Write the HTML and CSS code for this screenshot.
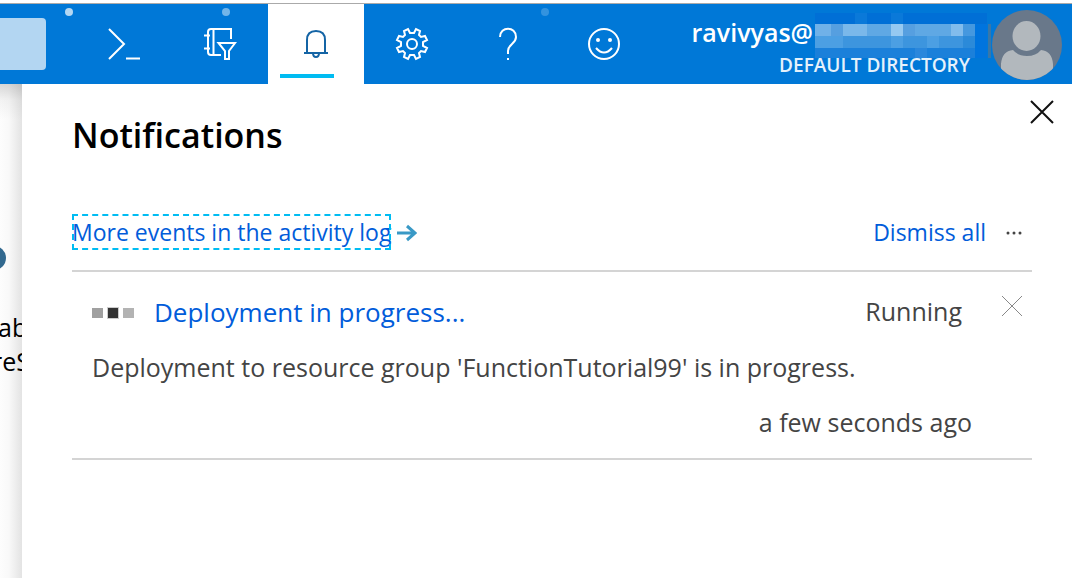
FILE: index.html
```html
<!DOCTYPE html>
<html lang="en">
<head>
<meta charset="utf-8">
<meta name="viewport" content="width=device-width, initial-scale=1">
<title>Notifications</title>
<link rel="stylesheet" href="styles.css">
</head>
<body>
<header class="topbar">
  <div class="search"></div>
  <nav class="tools" aria-label="Portal tools">
    <button class="tool" aria-label="Cloud Shell"><svg width="36" height="36" viewBox="0 0 36 36"><path d="M3 3 18 18 3 33M20 32.500H34"/></svg></button>
    <button class="tool" aria-label="Directory and subscription filter"><svg width="36" height="36" viewBox="0 0 36 36"><path d="M29 13V3H9Q6 3 6 6V26Q6 29 9 29H19M11.500 3V29M2 9.500H8M2 22.500H8M16.500 17H33L27 25V33H23V25Z"/></svg></button>
    <button class="tool active" aria-label="Notifications"><svg width="36" height="36" viewBox="0 0 36 36"><path d="M6 27H30M9 27V14Q9 5 18 5T27 14V27M15 27Q15 31 18 31T21 27"/></svg></button>
    <button class="tool" aria-label="Settings"><svg width="36" height="36" viewBox="0 0 36 36"><path d="M14 3 16 7H20L22 3 26 5 25 9 27 11 31 10 33 14 29 16V20L33 22 31 26 27 25 25 27 26 31 22 33 20 29H16L14 33 10 31 11 27 9 25 5 26 3 22 7 20V16L3 14 5 10 9 11 11 9 10 5Z"/><circle cx="18" cy="18" r="5"/></svg></button>
    <button class="tool" aria-label="Help"><svg width="36" height="36" viewBox="0 0 36 36"><path d="M10 11C10 0 26 0 26 11C26 18 18 18 18 25V28M18 32V34"/></svg></button>
    <button class="tool" aria-label="Feedback"><svg width="36" height="36" viewBox="0 0 36 36"><circle cx="18" cy="18" r="15"/><path d="M10 22Q18 31 26 22"/><g class="solid"><circle cx="12" cy="14" r="2"/><circle cx="24" cy="14" r="2"/></g></svg></button>
  </nav>
  <div class="account">
    <div class="who">
      <div class="user">
        <span>ravivyas@</span>
        <svg class="mask" width="176" height="45" viewBox="0 0 176 45" shape-rendering="crispEdges" aria-hidden="true">
          <path fill="#006fd6" d="M0 0H172V45H0Z"/>
          <path fill="#0a79d9" d="M40 0H52V11H40ZM76 0H88V11H76Z"/>
          <path fill="#5fa8e4" d="M0 11H160V23H0Z"/>
          <path fill="#70b1e8" d="M0 11H16V23H0Z"/>
          <path fill="#7ab8ea" d="M28 11H52V23H28Z"/>
          <path fill="#96c9f1" d="M76 11H88V23H76Z"/>
          <path fill="#569fe0" d="M16 11H28V23H16ZM88 11H100V23H88Z"/>
          <path fill="#82bcec" d="M136 11H148V23H136Z"/>
          <path fill="#4598df" d="M148 11H160V23H148Z"/>
          <path fill="#3d95de" d="M0 23H160V35H0Z"/>
          <path fill="#4c9fe3" d="M0 23H28V35H0ZM76 23H88V35H76ZM112 23H124V35H112Z"/>
          <path fill="#2b8ad9" d="M148 23H160V35H148Z"/>
          <path fill="#1b80da" d="M0 35H160V45H0Z"/>
          <path fill="#2a87dc" d="M100 35H112V45H100Z"/>
          <path fill="#0074de" d="M160 11H172V45H160Z"/>
          <path fill="#3977a8" d="M173 11H176V45H173Z"/>
        </svg>
      </div>
      <div class="directory">DEFAULT DIRECTORY</div>
    </div>
    <svg class="avatar" width="70" height="70" viewBox="0 0 70 70" role="img" aria-label="Account picture">
      <clipPath id="round"><circle cx="35" cy="35" r="35"/></clipPath>
      <g clip-path="url(#round)">
        <path fill="#69788a" d="M0 0H70V70H0Z"/>
        <ellipse cx="34.500" cy="26" rx="14" ry="15" fill="#b2b8bd"/>
        <path fill="#b2b8bd" d="M9 70V54Q10 41 21 40Q26 46 35 46T49 40Q60 41 61 54V70Z"/>
      </g>
    </svg>
  </div>
  <i class="spark spark-a"></i><i class="spark spark-b"></i><i class="spark spark-c"></i>
</header>
<div class="body">
  <aside class="page">
    <div class="knob"></div>
    <p>ab</p>
    <p class="cut">reS</p>
  </aside>
  <main class="panel">
    <button class="close" aria-label="Close"><svg width="24" height="24" viewBox="0 0 24 24"><path d="M1 1 23 23M23 1 1 23"/></svg></button>
    <h1>Notifications</h1>
    <div class="actions">
      <a class="more" href="#">More events in the activity log</a>
      <svg class="arrow" width="20" height="18" viewBox="0 0 20 18" aria-hidden="true"><path d="M0 9H18M10 2 18 9 10 16"/></svg>
      <button class="dismiss">Dismiss all</button>
      <button class="menu" aria-label="More options"><svg width="18" height="4" viewBox="0 0 18 4"><circle cx="3" cy="2" r="1.500"/><circle cx="9" cy="2" r="1.500"/><circle cx="15" cy="2" r="1.500"/></svg></button>
    </div>
    <article class="item">
      <div class="item-head">
        <svg class="progress" width="42" height="36" viewBox="0 0 42 36" aria-hidden="true"><path fill="#a0a0a0" d="M0 14H11V24H0Z"/><path fill="#333" stroke="#ccc" d="M15.500 13.500H26.500V24.500H15.500Z"/><path fill="#b3b3b3" d="M31 14H42V24H31Z"/></svg>
        <a class="item-title" href="#">Deployment in progress...</a>
        <span class="status">Running</span>
        <button class="remove" aria-label="Dismiss notification"><svg width="20" height="20" viewBox="0 0 20 20"><path d="M0 0 20 20M20 0 0 20"/></svg></button>
      </div>
      <p class="message">Deployment to resource group 'FunctionTutorial99' is in progress.</p>
      <p class="time">a few seconds ago</p>
    </article>
  </main>
</div>
</body>
</html>
```
FILE: styles.css
```css
* { box-sizing: border-box; }
body {
  margin: 0;
  min-height: 100vh;
  display: flex;
  flex-direction: column;
  background: #fff;
  font-family: "Open Sans", "Noto Sans", sans-serif;
}
h1, p { margin: 0; }
a { color: #015cda; text-decoration: none; }
button { border: 0; padding: 0; background: none; font: inherit; cursor: pointer; }
svg { display: block; flex: none; }

.topbar {
  position: relative;
  display: flex;
  height: 81px;
  margin-top: 3px;
  border-top: 1px solid #aaa;
  background: #0078d7;
  color: #fff;
}
.search {
  width: 46px;
  height: 52px;
  margin: 14px 30px 0 0;
  border-radius: 0 4px 4px 0;
  background: #b3d6f2;
}
.tools { display: flex; }
.tool {
  position: relative;
  width: 96px;
  display: grid;
  place-items: center;
  color: #fff;
}
.tool svg { fill: none; stroke: currentColor; stroke-width: 2; }
.tool .solid { fill: currentColor; stroke: none; }
.active { background: #fff; color: #1464a5; }
.active::after {
  content: "";
  position: absolute;
  left: 12px;
  bottom: 6px;
  width: 54px;
  height: 4px;
  background: #00bcf2;
}
.account { margin-left: auto; padding: 0 10px 0 0; display: flex; gap: 1px; }
.who { padding-top: 9px; }
.user {
  display: flex;
  align-items: flex-start;
  height: 40px;
  font-size: 25px;
  line-height: 38px;
  font-weight: 600;
}
.mask { margin-left: 2px; }
.directory {
  position: relative;
  padding-right: 21px;
  text-align: right;
  font-size: 19px;
  line-height: 24px;
  font-weight: 600;
  color: #e5f1fb;
}
.avatar { margin-top: 6px; }
.spark {
  position: absolute;
  top: 4px;
  width: 8px;
  height: 8px;
  border-radius: 50%;
  background: #fff;
}
.spark-a { left: 65px; opacity: .7; }
.spark-b { left: 222px; opacity: .45; }
.spark-c { left: 541px; opacity: .2; }

.body { flex: 1; display: flex; }
.page {
  width: 22px;
  overflow: hidden;
  padding-top: 162px;
  font-size: 25px;
  line-height: 34px;
  white-space: nowrap;
  background:
    linear-gradient(to bottom, rgba(0, 0, 0, .15), rgba(0, 0, 0, .04) 16px, transparent 36px),
    linear-gradient(to right, #fdfdfd, #f9f9f9 40%, #e3e3e3);
}
.knob {
  width: 24px;
  height: 24px;
  margin: 0 0 40px -18px;
  border-radius: 50%;
  background: #32698f;
}
.page p { text-indent: -2px; }
.page .cut { text-indent: -8px; }

.panel {
  position: relative;
  flex: 1;
  padding: 29px 40px 0 50px;
  background: #fff;
}
.close { position: absolute; top: 16px; right: 18px; }
.close path { stroke: #111; stroke-width: 2; }
h1 { margin-bottom: 57px; font-size: 34px; line-height: 44px; font-weight: 600; }
.actions {
  display: flex;
  align-items: center;
  padding-bottom: 20px;
  border-bottom: 2px solid #d4d4d4;
  font-size: 23px;
  line-height: 36px;
}
.more { outline: 2px dashed #00bcf2; outline-offset: -2px; }
.arrow { margin: 2px 0 0 6px; }
.arrow path { fill: none; stroke: #3999c6; stroke-width: 3; }
.dismiss { margin-left: auto; line-height: 36px; color: #015cda; }
.menu { margin: 2px 9px 0 19px; fill: #444; }
.item {
  padding: 22px 10px 18px 20px;
  border-bottom: 2px solid #d4d4d4;
  color: #444;
}
.item-head { display: flex; align-items: flex-start; }
.item-title { margin-left: 20px; font-size: 26px; line-height: 36px; }
.status { margin-left: auto; font-size: 25px; line-height: 34px; }
.remove { margin: 2px 0 0 40px; }
.remove path { stroke: #888; stroke-width: 1; }
.message { margin-top: 19px; font-size: 25px; line-height: 36px; }
.time {
  margin-top: 19px;
  padding-right: 50px;
  text-align: right;
  font-size: 25px;
  line-height: 36px;
}
```
